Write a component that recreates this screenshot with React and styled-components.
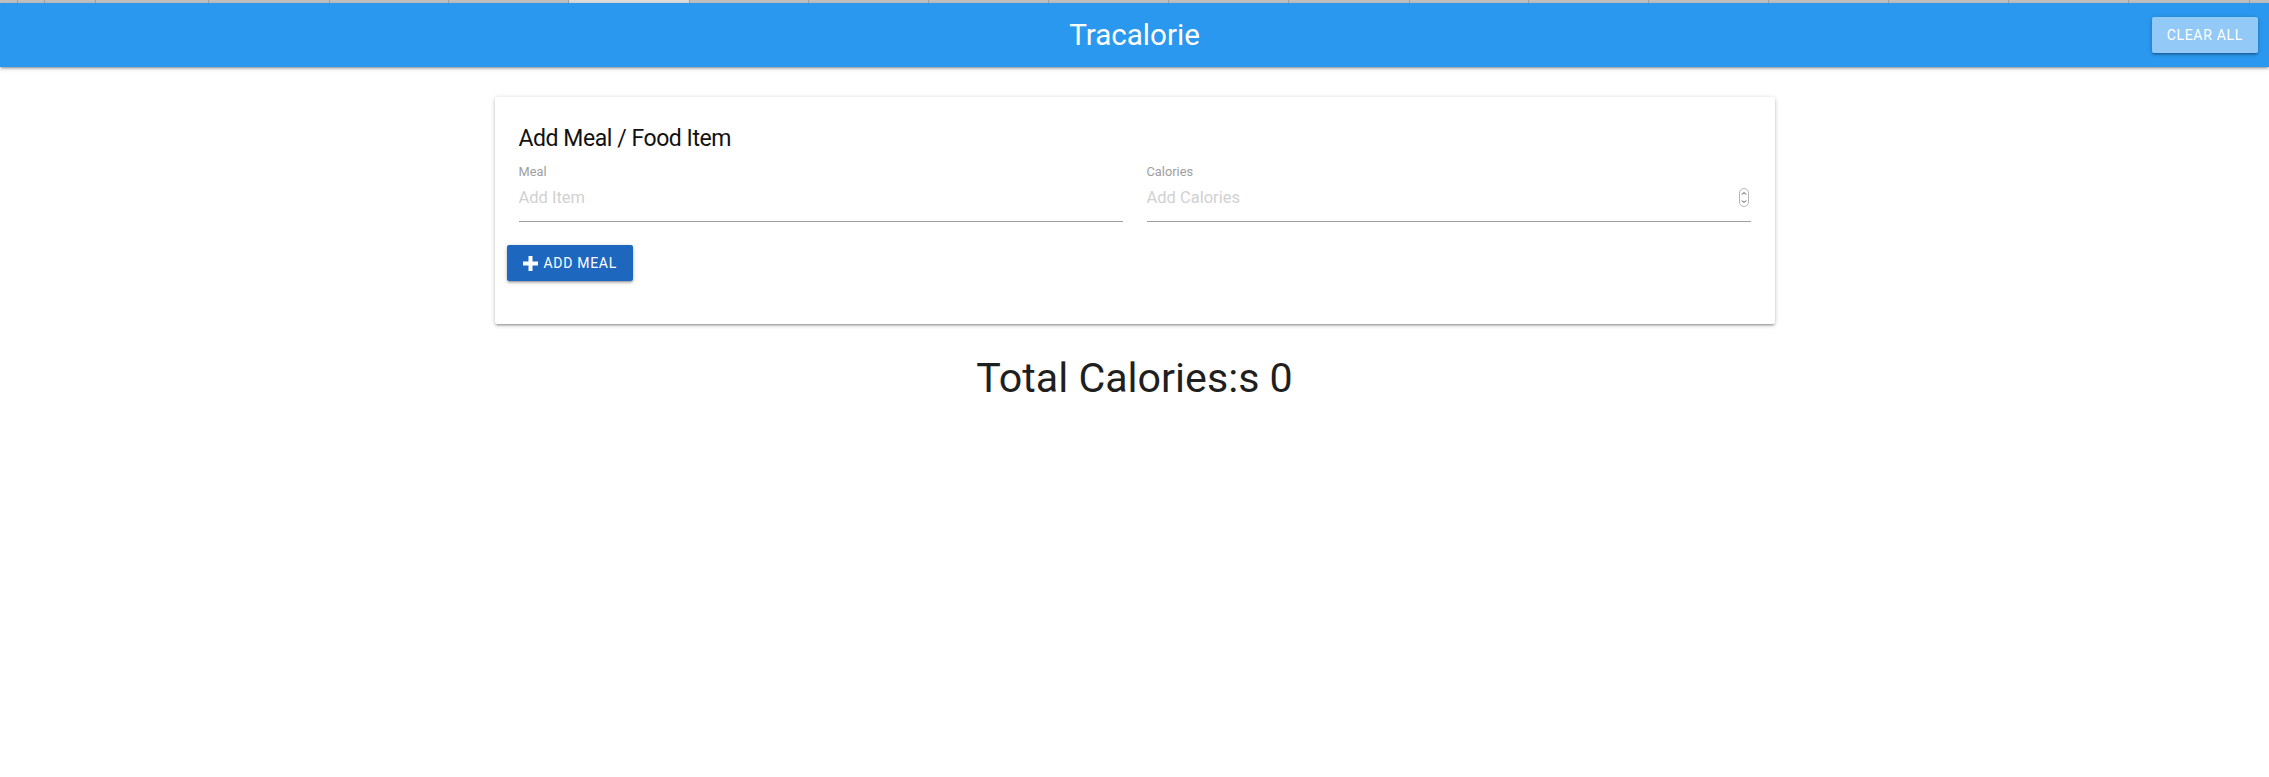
import React from 'react';
import styled, { createGlobalStyle } from 'styled-components';

const GlobalStyle = createGlobalStyle`
  html, body {
    margin: 0;
    padding: 0;
    background: #fff;
  }
  body {
    font-family: Roboto, "Noto Sans", sans-serif;
    color: rgba(0, 0, 0, 0.87);
  }
  * {
    box-sizing: border-box;
  }
`;

// browser tab strip above the page
const TabStrip = styled.div`
  display: flex;
  height: 3px;
  background: #c4c4c4;
  overflow: hidden;
`;

const TabCell = styled.div`
  flex: 0 0 ${({ w }) => w}px;
  border-left: 1px solid #a3a3a3;
  background: ${({ active }) => (active ? '#e0e0e0' : '#c4c4c4')};
  &:first-child {
    border-left: none;
  }
`;

const Nav = styled.nav`
  display: grid;
  grid-template-columns: 1fr auto 1fr;
  align-items: center;
  height: 64px;
  padding: 0 11px;
  background: #2b98f0;
  color: #fff;
  box-shadow: 0 2px 2px 0 rgba(0, 0, 0, 0.14), 0 3px 1px -2px rgba(0, 0, 0, 0.12),
    0 1px 5px 0 rgba(0, 0, 0, 0.2);
  position: relative;
  z-index: 1;
`;

const Brand = styled.a`
  grid-column: 2;
  font-size: 29.6px;
  line-height: 64px;
  color: #fff;
  text-decoration: none;
`;

const NavActions = styled.div`
  grid-column: 3;
  display: flex;
  justify-content: flex-end;
`;

const Button = styled.button`
  display: inline-flex;
  align-items: center;
  height: 36px;
  padding: 0 ${({ variant }) => (variant === 'light' ? '15px' : '16px')};
  border: none;
  border-radius: 2px;
  background: ${({ variant }) => (variant === 'light' ? '#93c9f7' : '#1e67bf')};
  color: #fff;
  font-family: Roboto, "Noto Sans", sans-serif;
  font-size: 14px;
  letter-spacing: 0.7px;
  text-transform: uppercase;
  cursor: pointer;
  box-shadow: 0 2px 2px 0 rgba(0, 0, 0, 0.14), 0 3px 1px -2px rgba(0, 0, 0, 0.12),
    0 1px 5px 0 rgba(0, 0, 0, 0.2);
`;

const Container = styled.main`
  width: 1280px;
  margin: 0 auto;
  padding-top: 30px;
`;

const Card = styled.section`
  background: #fff;
  border-radius: 2px;
  box-shadow: 0 2px 2px 0 rgba(0, 0, 0, 0.14), 0 3px 1px -2px rgba(0, 0, 0, 0.12),
    0 1px 5px 0 rgba(0, 0, 0, 0.2);
`;

const CardContent = styled.div`
  padding: 24px 24px 43px;
`;

const CardTitle = styled.h2`
  margin: 0;
  padding-top: 2px;
  font-size: 23px;
  font-weight: 400;
  letter-spacing: -0.45px;
  line-height: 32px;
  color: #111;
`;

const FormRow = styled.div`
  display: grid;
  grid-template-columns: 1fr 1fr;
  column-gap: 24px;
  margin: 18px 0 23px;
`;

const Field = styled.div`
  position: relative;
`;

const Label = styled.label`
  position: absolute;
  left: 0;
  top: -9px;
  font-size: 12.8px;
  line-height: 15px;
  color: #9e9e9e;
`;

const Input = styled.input`
  display: block;
  width: 100%;
  height: 49px;
  margin: 0;
  padding: 1px 0 0;
  border: none;
  border-bottom: 1px solid #9e9e9e;
  outline: none;
  background: transparent;
  font-family: Roboto, "Noto Sans", sans-serif;
  font-size: 16.5px;
  color: rgba(0, 0, 0, 0.87);
  &::placeholder {
    color: #d1d1d1;
  }
`;

const Spinner = styled.svg`
  position: absolute;
  right: 2px;
  top: 15px;
`;

const Actions = styled.div`
  display: flex;
  margin-left: -12px;
`;

const PlusIcon = styled.svg`
  margin-right: 6px;
`;

const Total = styled.h3`
  margin: 32px 0 0;
  text-align: center;
  font-size: 41.2px;
  font-weight: 400;
  line-height: 110%;
  color: #1f1f1f;
`;

const tabs = [17, 27, 51, 113, 121, 119, 120, 121, 119, 120, 120, 120, 120, 121, 119, 120, 120, 120, 120, 120, 121, 20];

export default function App() {
  return (
    <>
      <GlobalStyle />
      <TabStrip>
        {tabs.map((w, i) => (
          <TabCell key={i} w={w} active={i === 7} />
        ))}
      </TabStrip>
      <Nav>
        <Brand href="#">Tracalorie</Brand>
        <NavActions>
          <Button variant="light">Clear All</Button>
        </NavActions>
      </Nav>
      <Container>
        <Card>
          <CardContent>
            <CardTitle>Add Meal / Food Item</CardTitle>
            <FormRow>
              <Field>
                <Label>Meal</Label>
                <Input type="text" placeholder="Add Item" />
              </Field>
              <Field>
                <Label>Calories</Label>
                <Input type="text" placeholder="Add Calories" />
                <Spinner width="10" height="19" viewBox="0 0 10 19">
                  <rect x="0.5" y="0.5" width="9" height="18" rx="4.5" fill="#fff" stroke="#b5b5b5" />
                  <path d="M3 6.5 L5 4.5 L7 6.5" fill="none" stroke="#444" strokeWidth="1" />
                  <path d="M3 12.5 L5 14.5 L7 12.5" fill="none" stroke="#444" strokeWidth="1" />
                </Spinner>
              </Field>
            </FormRow>
            <Actions>
              <Button>
                <PlusIcon width="15" height="15" viewBox="0 0 15 15">
                  <path d="M5.5 0h4v5.5H15v4H9.5V15h-4V9.5H0v-4h5.5z" fill="#fff" />
                </PlusIcon>
                Add Meal
              </Button>
            </Actions>
          </CardContent>
        </Card>
        <Total>Total Calories:s 0</Total>
      </Container>
    </>
  );
}
